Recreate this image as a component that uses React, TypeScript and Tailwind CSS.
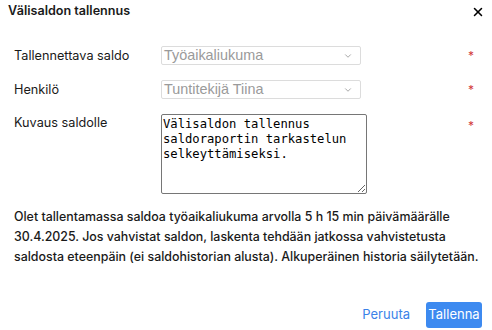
import { X, ChevronDown } from "lucide-react";

const Req = () => (
  <span className="w-[20px] text-right text-[12px] leading-none text-[#d33a3a] pr-[8px]">*</span>
);

const FakeSelect = ({ value }: { value: string }) => (
  <div className="w-[200px] h-[19px] border border-[#dcdcdc] rounded-[2px] flex items-center justify-between pl-[2px] pr-[7px] bg-white">
    <span className="text-[14.4px] text-[#9a9a9a] leading-none" style={{ fontFamily: '"Liberation Sans", Arial, sans-serif' }}>
      {value}
    </span>
    <ChevronDown size={10} strokeWidth={2.2} className="text-[#a0a0a0]" />
  </div>
);

export default function App() {
  return (
    <div className="w-[492px] h-[330px] bg-white relative overflow-hidden text-[#1a1a1a]" style={{ fontFamily: "Inter, sans-serif" }}>
      <div className="flex items-center justify-between pl-[8px] pr-[7px] pt-[1px] h-[22px]">
        <h2 className="text-[12.6px] font-semibold">Välisaldon tallennus</h2>
        <X size={14} strokeWidth={2.6} className="text-black" />
      </div>

      <div className="mt-[24px] pl-[14px] pr-[10px] flex flex-col">
        <div className="flex items-center h-[19px]">
          <label className="w-[147px] text-[12.7px]">Tallennettava saldo</label>
          <FakeSelect value="Työaikaliukuma" />
          <div className="flex-1" />
          <Req />
        </div>
        <div className="flex items-center h-[19px] mt-[15px]">
          <label className="w-[147px] text-[12.7px]">Henkilö</label>
          <FakeSelect value="Tuntitekijä Tiina" />
          <div className="flex-1" />
          <Req />
        </div>
        <div className="flex items-start mt-[15px]">
          <label className="w-[147px] text-[12.7px] leading-[18px]">Kuvaus saldolle</label>
          <textarea
            readOnly
            defaultValue={"Välisaldon tallennus saldoraportin tarkastelun selkeyttämiseksi."}
            className="w-[206px] h-[80px] border border-[#767676] rounded-[2px] px-[1px] pt-[2px] text-[12.2px] leading-[15px] text-black resize-y outline-none"
            style={{ fontFamily: '"DejaVu Sans Mono", monospace' }}
          />
          <div className="flex-1" />
          <div className="pt-[6px] flex"><Req /></div>
        </div>
      </div>

      <p className="mt-[13px] pl-[14px] pr-[5px] text-[12.4px] font-medium leading-[20px] text-[#1a1a1a]">
        Olet tallentamassa saldoa työaikaliukuma arvolla 5 h 15 min päivämäärälle 30.4.2025. Jos vahvistat saldon, laskenta tehdään jatkossa vahvistetusta saldosta eteenpäin (ei saldohistorian alusta). Alkuperäinen historia säilytetään.
      </p>

      <div className="absolute right-[10px] bottom-[2px] flex items-center gap-[8px]">
        <button className="h-[26px] px-[8px] text-[13px] text-[#3a82e8]">Peruuta</button>
        <button className="h-[26px] w-[56px] rounded-[3px] bg-[#3d8af0] text-white text-[13px]">Tallenna</button>
      </div>
    </div>
  );
}
